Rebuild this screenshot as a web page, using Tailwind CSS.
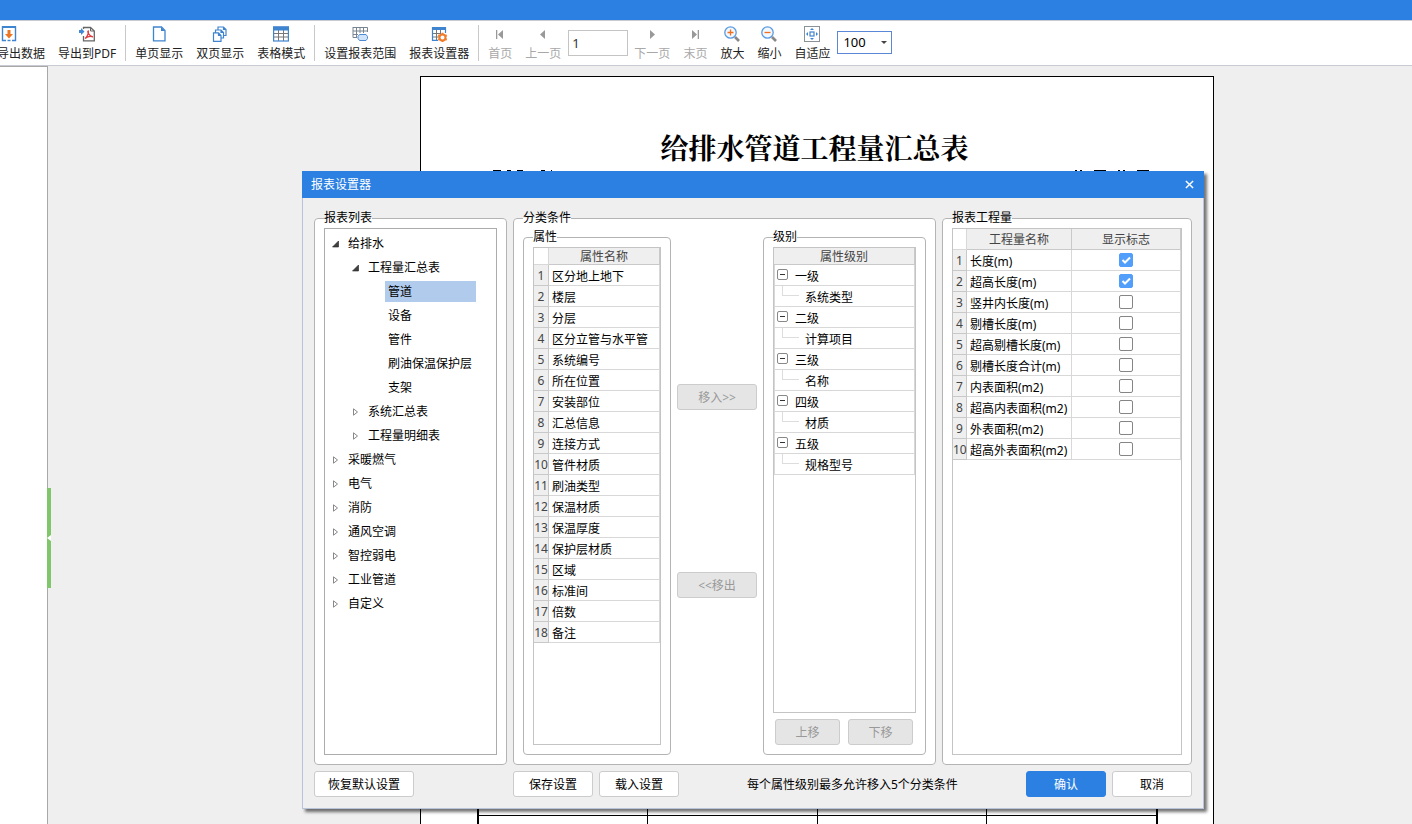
<!DOCTYPE html>
<html lang="zh-CN">
<head>
<meta charset="utf-8">
<title>报表设置器</title>
<script src="https://cdn.jsdelivr.net/npm/@tailwindcss/browser@4"></script>
</head>
<body class="flex h-screen flex-col overflow-hidden bg-[#efefef] font-['Noto_Sans','Noto_Sans_CJK_SC',sans-serif] text-xs leading-4 text-black">

<header class="h-5 shrink-0 bg-[#2c80e2]"></header>

<nav class="flex h-[46px] shrink-0 items-center overflow-hidden border-y border-[#c9cad2] bg-white text-[#222]" aria-label="工具栏">
  <div class="-ml-[34px] flex items-center gap-px whitespace-nowrap [&_button]:flex [&_button]:h-[39px] [&_button]:flex-col [&_button]:items-center [&_button]:gap-1 [&_button]:rounded [&_button]:px-[6px] [&_button]:pt-[2px] [&_svg]:size-4 [&_svg]:shrink-0 [&_button:disabled]:text-[#a8a8a8]">
    <button type="button" class="w-[85px]"><svg viewBox="0 0 16 16" fill="none"><path d="M5 14.5H1.500V1H14.500V14.500H11" stroke="#3f84cf" stroke-width="1.400"/><path d="M1 1H15" stroke="#3f84cf" stroke-width="2"/><path d="M6.500 4H9.500V8H12L8 12.500L4 8H6.500Z" fill="#ee7623"/><path d="M6.500 14.500H9.500" stroke="#3f84cf" stroke-width="1.400"/></svg><span class="self-end">导出数据</span></button>
    <button type="button"><svg viewBox="0 0 16 16" fill="none"><path d="M4.500 3V1.500H11.500L15.300 5V14.800H4.500V10" stroke="#666" stroke-width="1.300"/><path d="M11.500 1.500V5H15" stroke="#666"/><path d="M0 4H2V2L5.500 5.500L2 9V7H0Z" fill="#4388d6"/><path d="M6 12.500C8 11 10 7 9.300 5C8 5 9.500 10 14 10.800C11 9.800 8.500 10.500 6 12.500Z" stroke="#df3b42" stroke-width="1.300"/></svg>导出到PDF</button>
    <span class="mx-[2px] h-9 w-px bg-[#c9c9c9]"></span>
    <button type="button"><svg viewBox="0 0 16 16" fill="none"><path d="M2.500 1H10.500L14 4.500V14.800H2.500Z" stroke="#3f84cf" stroke-width="1.300"/><path d="M10 1V5H14Z" fill="#3f84cf"/></svg>单页显示</button>
    <button type="button"><svg viewBox="0 0 16 16" fill="none" stroke="#3f84cf" stroke-width="1.200"><path d="M6 4V1H11.500L14 3.500V9.500H12M11.500 1V3.500H14M3.500 7V4H9L11.500 6.500V12H9.500M9 4V6.500H11.500M1.500 6.800H6.500L9 9.500V15.300H1.500ZM6.500 6.800V9.500H9"/></svg>双页显示</button>
    <button type="button"><svg viewBox="0 0 16 16" fill="none"><path d="M1 7.500H15M1 11H15M5.500 4V15M10.500 4V15" stroke="#777"/><rect x=".6" y="1" width="14.800" height="14" stroke="#3f84cf" stroke-width="1.200"/><path d="M0 2.500H16" stroke="#3f84cf" stroke-width="4"/></svg>表格模式</button>
    <span class="mx-[2px] h-9 w-px bg-[#c9c9c9]"></span>
    <button type="button"><svg viewBox="0 0 16 16" fill="none"><path d="M1 1.500H15.500V6M1 1V11.500H5M1 5H15M1 8.500H6M4.500 1V11.500M8 1V7M11.500 1V7" stroke="#788590"/><path d="M6 10.500L7.500 8.500H14L15.500 10.500V12.500L14 14.500H7.500L6 12.500Z" fill="#cfe3fa" stroke="#4c8ad2"/></svg>设置报表范围</button>
    <button type="button"><svg viewBox="0 0 16 16" fill="none"><path d="M1.500 7.500H9M1.500 11H8M5.500 4V14M9.500 4V8" stroke="#777"/><path d="M7 14.400H1.500V1.500H14.500V7" stroke="#3f84cf" stroke-width="1.200"/><path d="M1 2.500H15" stroke="#3f84cf" stroke-width="3"/><path d="M11.500 6.800V8M11.500 15V16.200M7.300 9.200L8.400 9.800M15.700 9.200L14.600 9.800M7.300 13.800L8.400 13.200M15.700 13.800L14.600 13.200" stroke="#f07b2a" stroke-width="2"/><circle cx="11.500" cy="11.500" r="3" stroke="#f07b2a" stroke-width="2" fill="#fff"/></svg>报表设置器</button>
    <span class="mx-[2px] h-9 w-px bg-[#c9c9c9]"></span>
    <button type="button" disabled><svg viewBox="0 0 16 16" fill="#999"><path d="M4 4H5.300V13H4ZM11 4V13L6 8.500Z"/></svg>首页</button>
    <button type="button" disabled><svg viewBox="0 0 16 16" fill="#999"><path d="M10 4V13L5 8.500Z"/></svg>上一页</button>
    <input aria-label="页码" value="1" class="-mr-px h-[26px] w-[60px] border border-[#c4c4c4] bg-white px-[3px] text-[13px] text-[#333]">
    <button type="button" disabled><svg viewBox="0 0 16 16" fill="#999"><path d="M6 4V13L11 8.500Z"/></svg>下一页</button>
    <button type="button" disabled><svg viewBox="0 0 16 16" fill="#999"><path d="M10.700 4H12V13H10.700ZM5 4V13L10 8.500Z"/></svg>末页</button>
    <button type="button"><svg viewBox="0 0 16 16" fill="none"><circle cx="6.500" cy="6.500" r="5.700" fill="#f2f8ff" stroke="#5b9be0" stroke-width="1.300"/><path d="M3.500 6.500H9.500M6.500 3.500V9.500" stroke="#f07020" stroke-width="1.300"/><path d="M11 11L15 15" stroke="#888" stroke-width="2.600"/></svg>放大</button>
    <button type="button"><svg viewBox="0 0 16 16" fill="none"><circle cx="6.500" cy="6.500" r="5.700" fill="#f2f8ff" stroke="#5b9be0" stroke-width="1.300"/><path d="M3.500 6.500H9.500" stroke="#f07020" stroke-width="1.300"/><path d="M11 11L15 15" stroke="#888" stroke-width="2.600"/></svg>缩小</button>
    <button type="button"><svg viewBox="0 0 16 16" fill="none"><rect x=".5" y=".5" width="15" height="15" stroke="#8a9299"/><rect x="6" y="6" width="4" height="4" stroke="#3f84cf" stroke-width="1.200"/><path d="M8 2L10 4H6ZM8 14L10 12H6ZM2 8L4 6V10ZM14 8L12 6V10Z" fill="#3f84cf"/></svg>自适应</button>
    <div class="relative mb-[2px]">
      <select aria-label="缩放比例" class="block h-[23px] w-[55px] appearance-none border border-[#5b87d6] bg-white pl-[5px] text-[13px] leading-5 text-black"><option>100</option></select>
      <span class="pointer-events-none absolute top-[10px] right-[5px] border-x-[3px] border-t-[3px] border-x-transparent border-t-[#444]"></span>
    </div>
  </div>
</nav>

<main class="flex min-h-0 flex-1">
  <aside class="relative w-12 shrink-0 border-t border-r border-[#a8a8a8] bg-white">
    <div class="absolute top-[421px] -right-1 flex h-[100px] w-1 items-center bg-[#80c66b]">
      <span class="border-y-[3px] border-r-4 border-y-transparent border-r-white"></span>
    </div>
  </aside>
  <section class="min-w-0 flex-1 overflow-hidden pt-[10px] pl-[372px]">
    <article class="flex h-full w-[794px] flex-col border border-b-0 border-black bg-white pr-[55px] pl-14">
      <h1 class="mt-[50px] pr-[6px] text-center font-['Noto_Serif_CJK_SC','Noto_Sans_CJK_SC',serif] text-[28px] leading-10 font-bold">给排水管道工程量汇总表</h1>
      <div class="mt-[3px] flex h-2 justify-between pr-2 pl-4">
        <div class="flex gap-[6px]"><span class="h-1 w-2 bg-black"></span><span class="h-1 w-1 bg-black"></span><span class="h-1 w-[6px] bg-black"></span><span class="ml-3 h-1 w-1 bg-black"></span><span class="h-1 w-px bg-black"></span></div>
        <div class="flex gap-3 pr-px"><span class="h-1 w-[7px] border-x-2 border-black"></span><span class="h-1 w-3 bg-black"></span><span class="h-1 w-[7px] border-x-2 border-black"></span><span class="h-1 w-3 bg-black"></span></div>
      </div>
      <div class="mt-8 grid min-h-0 flex-1 grid-cols-4 grid-rows-[1fr_8px] border-x-2 border-t-2 border-black [&>div]:border-r [&>div]:border-b [&>div]:border-black [&>div:nth-child(4n)]:border-r-0 [&>div:nth-child(n+5)]:border-b-0">
        <div></div><div></div><div></div><div></div>
        <div></div><div></div><div></div><div></div>
      </div>
    </article>
  </section>
</main>

<div role="dialog" aria-labelledby="dialog-title" class="absolute top-[171px] left-[302px] flex h-[638px] w-[902px] flex-col bg-[#efefef] shadow-[3px_3px_3px_rgba(0,0,0,0.55)]">
  <div class="flex h-[27px] shrink-0 items-center justify-between bg-[#2c80e2] px-[10px] text-white">
    <h2 id="dialog-title" class="-ml-px">报表设置器</h2>
    <button type="button" aria-label="关闭"><svg class="size-[9px]" viewBox="0 0 10 10" fill="none" stroke="#fff" stroke-width="1.600"><path d="M1 1L9 9M9 1L1 9"/></svg></button>
  </div>

  <div class="flex min-h-0 flex-1 flex-col gap-[6px] border border-t-0 border-[#b9c3d9] px-[11px] pt-3 pb-[11px]">
    <div class="flex min-h-0 flex-1 gap-[6px]">

      <fieldset class="flex w-[193px] min-w-0 flex-col rounded border border-[#b4b4b4] bg-white px-[9px] pt-[2px] pb-[9px]">
        <legend>报表列表</legend>
        <ul role="tree" class="min-h-0 flex-1 border border-[#acacac] bg-white pt-[2px] [&_li>div]:flex [&_li>div]:h-6 [&_li>div]:items-center [&_li>div]:pt-[2px] [&_svg]:mr-[9px] [&_svg]:h-2 [&_svg]:w-[7px]">
          <li role="treeitem" aria-expanded="true"><div class="pl-[7px]"><svg viewBox="0 0 7 8"><path d="M6.500 1V7H.5Z" fill="#404040" stroke="#222" stroke-width=".6"/></svg>给排水</div>
            <ul role="group">
              <li role="treeitem" aria-expanded="true"><div class="pl-[27px]"><svg viewBox="0 0 7 8"><path d="M6.500 1V7H.5Z" fill="#404040" stroke="#222" stroke-width=".6"/></svg>工程量汇总表</div>
                <ul role="group">
                  <li role="treeitem" aria-selected="true"><div class="pl-[60px]"><span class="mb-[2px] flex h-[21px] w-[91px] items-center bg-[#b1cbed] pt-[2px] pl-[3px]">管道</span></div></li>
                  <li role="treeitem"><div class="pl-[63px]">设备</div></li>
                  <li role="treeitem"><div class="pl-[63px]">管件</div></li>
                  <li role="treeitem"><div class="pl-[63px]">刷油保温保护层</div></li>
                  <li role="treeitem"><div class="pl-[63px]">支架</div></li>
                </ul>
              </li>
              <li role="treeitem"><div class="pl-[27px]"><svg viewBox="0 0 7 8"><path d="M1.500 .8V7.200L5.500 4Z" fill="none" stroke="#888"/></svg>系统汇总表</div></li>
              <li role="treeitem"><div class="pl-[27px]"><svg viewBox="0 0 7 8"><path d="M1.500 .8V7.200L5.500 4Z" fill="none" stroke="#888"/></svg>工程量明细表</div></li>
            </ul>
          </li>
          <li role="treeitem"><div class="pl-[7px]"><svg viewBox="0 0 7 8"><path d="M1.500 .8V7.200L5.500 4Z" fill="none" stroke="#888"/></svg>采暖燃气</div></li>
          <li role="treeitem"><div class="pl-[7px]"><svg viewBox="0 0 7 8"><path d="M1.500 .8V7.200L5.500 4Z" fill="none" stroke="#888"/></svg>电气</div></li>
          <li role="treeitem"><div class="pl-[7px]"><svg viewBox="0 0 7 8"><path d="M1.500 .8V7.200L5.500 4Z" fill="none" stroke="#888"/></svg>消防</div></li>
          <li role="treeitem"><div class="pl-[7px]"><svg viewBox="0 0 7 8"><path d="M1.500 .8V7.200L5.500 4Z" fill="none" stroke="#888"/></svg>通风空调</div></li>
          <li role="treeitem"><div class="pl-[7px]"><svg viewBox="0 0 7 8"><path d="M1.500 .8V7.200L5.500 4Z" fill="none" stroke="#888"/></svg>智控弱电</div></li>
          <li role="treeitem"><div class="pl-[7px]"><svg viewBox="0 0 7 8"><path d="M1.500 .8V7.200L5.500 4Z" fill="none" stroke="#888"/></svg>工业管道</div></li>
          <li role="treeitem"><div class="pl-[7px]"><svg viewBox="0 0 7 8"><path d="M1.500 .8V7.200L5.500 4Z" fill="none" stroke="#888"/></svg>自定义</div></li>
        </ul>
      </fieldset>

      <fieldset class="flex min-w-0 flex-1 gap-[6px] rounded border border-[#b4b4b4] bg-white px-[9px] pt-[3px] pb-[9px]">
        <legend>分类条件</legend>

        <fieldset class="flex w-[148px] min-w-0 flex-col rounded border border-[#b4b4b4] px-[9px] pt-[2px] pb-[9px]">
          <legend>属性</legend>
          <div class="min-h-0 flex-1 border border-[#c4c4c4]">
            <table class="w-full border-separate border-spacing-0 [&_td]:border-r [&_td]:border-b [&_td]:border-[#d8d8d8] [&_td]:p-0 [&_tbody_td]:h-[21px] [&_tbody_td]:pt-1 [&_tbody_td]:pl-[3px] [&_th]:border-r [&_th]:border-b [&_th]:border-[#c9c9c9] [&_th]:bg-[#efefef] [&_th]:p-0 [&_th]:pt-[2px] [&_th]:font-normal [&_th]:text-[#444] [&_thead_th]:h-[17px] [&_thead_th]:leading-[14px]">
              <thead><tr><td class="w-[15px]"></td><th scope="col">属性名称</th></tr></thead>
              <tbody>
                <tr><th scope="row">1</th><td>区分地上地下</td></tr>
                <tr><th scope="row">2</th><td>楼层</td></tr>
                <tr><th scope="row">3</th><td>分层</td></tr>
                <tr><th scope="row">4</th><td>区分立管与水平管</td></tr>
                <tr><th scope="row">5</th><td>系统编号</td></tr>
                <tr><th scope="row">6</th><td>所在位置</td></tr>
                <tr><th scope="row">7</th><td>安装部位</td></tr>
                <tr><th scope="row">8</th><td>汇总信息</td></tr>
                <tr><th scope="row">9</th><td>连接方式</td></tr>
                <tr><th scope="row">10</th><td>管件材质</td></tr>
                <tr><th scope="row">11</th><td>刷油类型</td></tr>
                <tr><th scope="row">12</th><td>保温材质</td></tr>
                <tr><th scope="row">13</th><td>保温厚度</td></tr>
                <tr><th scope="row">14</th><td>保护层材质</td></tr>
                <tr><th scope="row">15</th><td>区域</td></tr>
                <tr><th scope="row">16</th><td>标准间</td></tr>
                <tr><th scope="row">17</th><td>倍数</td></tr>
                <tr><th scope="row">18</th><td>备注</td></tr>
              </tbody>
            </table>
          </div>
        </fieldset>

        <div class="flex w-20 flex-col gap-[162px] pt-[155px] text-[#999] [&_button]:h-[26px] [&_button]:rounded-[3px] [&_button]:border [&_button]:border-[#ccc] [&_button]:bg-[#e5e5e5] [&_button]:pt-[2px]">
          <button type="button" disabled>移入&gt;&gt;</button>
          <button type="button" disabled>&lt;&lt;移出</button>
        </div>

        <fieldset class="flex min-w-0 flex-1 flex-col gap-[6px] rounded border border-[#b4b4b4] px-[9px] pt-[2px] pb-[9px]">
          <legend>级别</legend>
          <div class="min-h-0 flex-1 border border-[#c4c4c4]">
            <table class="w-full border-separate border-spacing-0 [&_td]:h-[21px] [&_td]:border-x [&_td]:border-b [&_td]:border-[#d8d8d8] [&_td]:p-0 [&_td>div]:flex [&_td>div]:h-5 [&_td>div]:pl-[2px] [&_td_span]:pt-1 [&_td_button]:mt-1 [&_td_button]:mr-[7px] [&_td_button]:h-[11px] [&_td_button]:w-[11px] [&_svg]:block [&_i]:mr-[6px] [&_i]:ml-[5px] [&_i]:h-[10px] [&_i]:w-[17px] [&_i]:border-b [&_i]:border-l [&_i]:border-[#ddd]">
              <thead><tr><th scope="col" class="h-[17px] border-r border-b border-[#c9c9c9] bg-[#efefef] p-0 pt-[2px] leading-[14px] font-normal text-[#444]">属性级别</th></tr></thead>
              <tbody>
                <tr><td><div><button type="button" aria-label="折叠一级"><svg viewBox="0 0 11 11" fill="none"><rect x=".5" y=".5" width="10" height="10" rx="1.500" stroke="#888"/><path d="M3 5.500H8" stroke="#333"/></svg></button><span>一级</span></div></td></tr>
                <tr><td><div><i></i><span>系统类型</span></div></td></tr>
                <tr><td><div><button type="button" aria-label="折叠二级"><svg viewBox="0 0 11 11" fill="none"><rect x=".5" y=".5" width="10" height="10" rx="1.500" stroke="#888"/><path d="M3 5.500H8" stroke="#333"/></svg></button><span>二级</span></div></td></tr>
                <tr><td><div><i></i><span>计算项目</span></div></td></tr>
                <tr><td><div><button type="button" aria-label="折叠三级"><svg viewBox="0 0 11 11" fill="none"><rect x=".5" y=".5" width="10" height="10" rx="1.500" stroke="#888"/><path d="M3 5.500H8" stroke="#333"/></svg></button><span>三级</span></div></td></tr>
                <tr><td><div><i></i><span>名称</span></div></td></tr>
                <tr><td><div><button type="button" aria-label="折叠四级"><svg viewBox="0 0 11 11" fill="none"><rect x=".5" y=".5" width="10" height="10" rx="1.500" stroke="#888"/><path d="M3 5.500H8" stroke="#333"/></svg></button><span>四级</span></div></td></tr>
                <tr><td><div><i></i><span>材质</span></div></td></tr>
                <tr><td><div><button type="button" aria-label="折叠五级"><svg viewBox="0 0 11 11" fill="none"><rect x=".5" y=".5" width="10" height="10" rx="1.500" stroke="#888"/><path d="M3 5.500H8" stroke="#333"/></svg></button><span>五级</span></div></td></tr>
                <tr><td><div><i></i><span>规格型号</span></div></td></tr>
              </tbody>
            </table>
          </div>
          <div class="flex gap-2 px-[2px] text-[#999] [&_button]:h-[26px] [&_button]:w-[65px] [&_button]:rounded-[3px] [&_button]:border [&_button]:border-[#ccc] [&_button]:bg-[#e5e5e5] [&_button]:pt-[2px]">
            <button type="button" disabled>上移</button>
            <button type="button" disabled>下移</button>
          </div>
        </fieldset>
      </fieldset>

      <fieldset class="flex w-[250px] min-w-0 flex-col rounded border border-[#b4b4b4] bg-white px-[9px] pt-[2px] pb-[9px]">
        <legend>报表工程量</legend>
        <div class="min-h-0 flex-1 border border-[#c4c4c4]">
          <table class="w-full table-fixed border-separate border-spacing-0 whitespace-nowrap [&_td]:h-[21px] [&_td]:border-r [&_td]:border-b [&_td]:border-[#d8d8d8] [&_td]:p-0 [&_th]:h-[21px] [&_th]:border-r [&_th]:border-b [&_th]:border-[#c9c9c9] [&_th]:bg-[#efefef] [&_th]:p-0 [&_th]:pt-[2px] [&_th]:font-normal [&_th]:text-[#444] [&_tbody_td:nth-child(2)]:pt-1 [&_tbody_td:nth-child(2)]:pl-[3px] [&_input]:col-start-1 [&_input]:row-start-1 [&_input]:size-[14px] [&_input]:appearance-none [&_input]:rounded-[2px] [&_input]:border [&_input]:border-[#858585] [&_input]:bg-white [&_input:checked]:border-[#519ffb] [&_input:checked]:bg-[#519ffb] [&_td>div]:grid [&_td>div]:h-[18px] [&_td>div]:place-items-center [&_svg]:pointer-events-none [&_svg]:col-start-1 [&_svg]:row-start-1 [&_svg]:size-[14px]">
            <colgroup><col class="w-[14px]"><col class="w-[105px]"><col></colgroup>
            <thead><tr><td></td><th scope="col">工程量名称</th><th scope="col">显示标志</th></tr></thead>
            <tbody>
              <tr><th scope="row">1</th><td>长度(m)</td><td><div><input type="checkbox" aria-label="长度(m)" checked><svg viewBox="0 0 14 14" fill="none" stroke="#fff" stroke-width="2"><path d="M3.500 7L6 9.500L11 4.500"/></svg></div></td></tr>
              <tr><th scope="row">2</th><td>超高长度(m)</td><td><div><input type="checkbox" aria-label="超高长度(m)" checked><svg viewBox="0 0 14 14" fill="none" stroke="#fff" stroke-width="2"><path d="M3.500 7L6 9.500L11 4.500"/></svg></div></td></tr>
              <tr><th scope="row">3</th><td>竖井内长度(m)</td><td><div><input type="checkbox" aria-label="竖井内长度(m)"></div></td></tr>
              <tr><th scope="row">4</th><td>剔槽长度(m)</td><td><div><input type="checkbox" aria-label="剔槽长度(m)"></div></td></tr>
              <tr><th scope="row">5</th><td>超高剔槽长度(m)</td><td><div><input type="checkbox" aria-label="超高剔槽长度(m)"></div></td></tr>
              <tr><th scope="row">6</th><td>剔槽长度合计(m)</td><td><div><input type="checkbox" aria-label="剔槽长度合计(m)"></div></td></tr>
              <tr><th scope="row">7</th><td>内表面积(m2)</td><td><div><input type="checkbox" aria-label="内表面积(m2)"></div></td></tr>
              <tr><th scope="row">8</th><td>超高内表面积(m2)</td><td><div><input type="checkbox" aria-label="超高内表面积(m2)"></div></td></tr>
              <tr><th scope="row">9</th><td>外表面积(m2)</td><td><div><input type="checkbox" aria-label="外表面积(m2)"></div></td></tr>
              <tr><th scope="row">10</th><td>超高外表面积(m2)</td><td><div><input type="checkbox" aria-label="超高外表面积(m2)"></div></td></tr>
            </tbody>
          </table>
        </div>
      </fieldset>
    </div>

    <div class="flex shrink-0 items-center gap-[6px] [&_button]:h-[26px] [&_button]:rounded-[3px] [&_button]:border [&_button]:pt-[2px]">
      <div class="flex w-[193px]"><button type="button" class="w-[100px] border-[#ccc] bg-white">恢复默认设置</button></div>
      <button type="button" class="w-20 border-[#ccc] bg-white">保存设置</button>
      <button type="button" class="w-20 border-[#ccc] bg-white">载入设置</button>
      <p class="ml-[62px] flex-1 pt-[2px]">每个属性级别最多允许移入5个分类条件</p>
      <button type="button" class="w-20 border-[#2c80e2] bg-[#2c80e2] text-white">确认</button>
      <button type="button" class="w-20 border-[#ccc] bg-white">取消</button>
    </div>
  </div>
</div>
</body>
</html>
